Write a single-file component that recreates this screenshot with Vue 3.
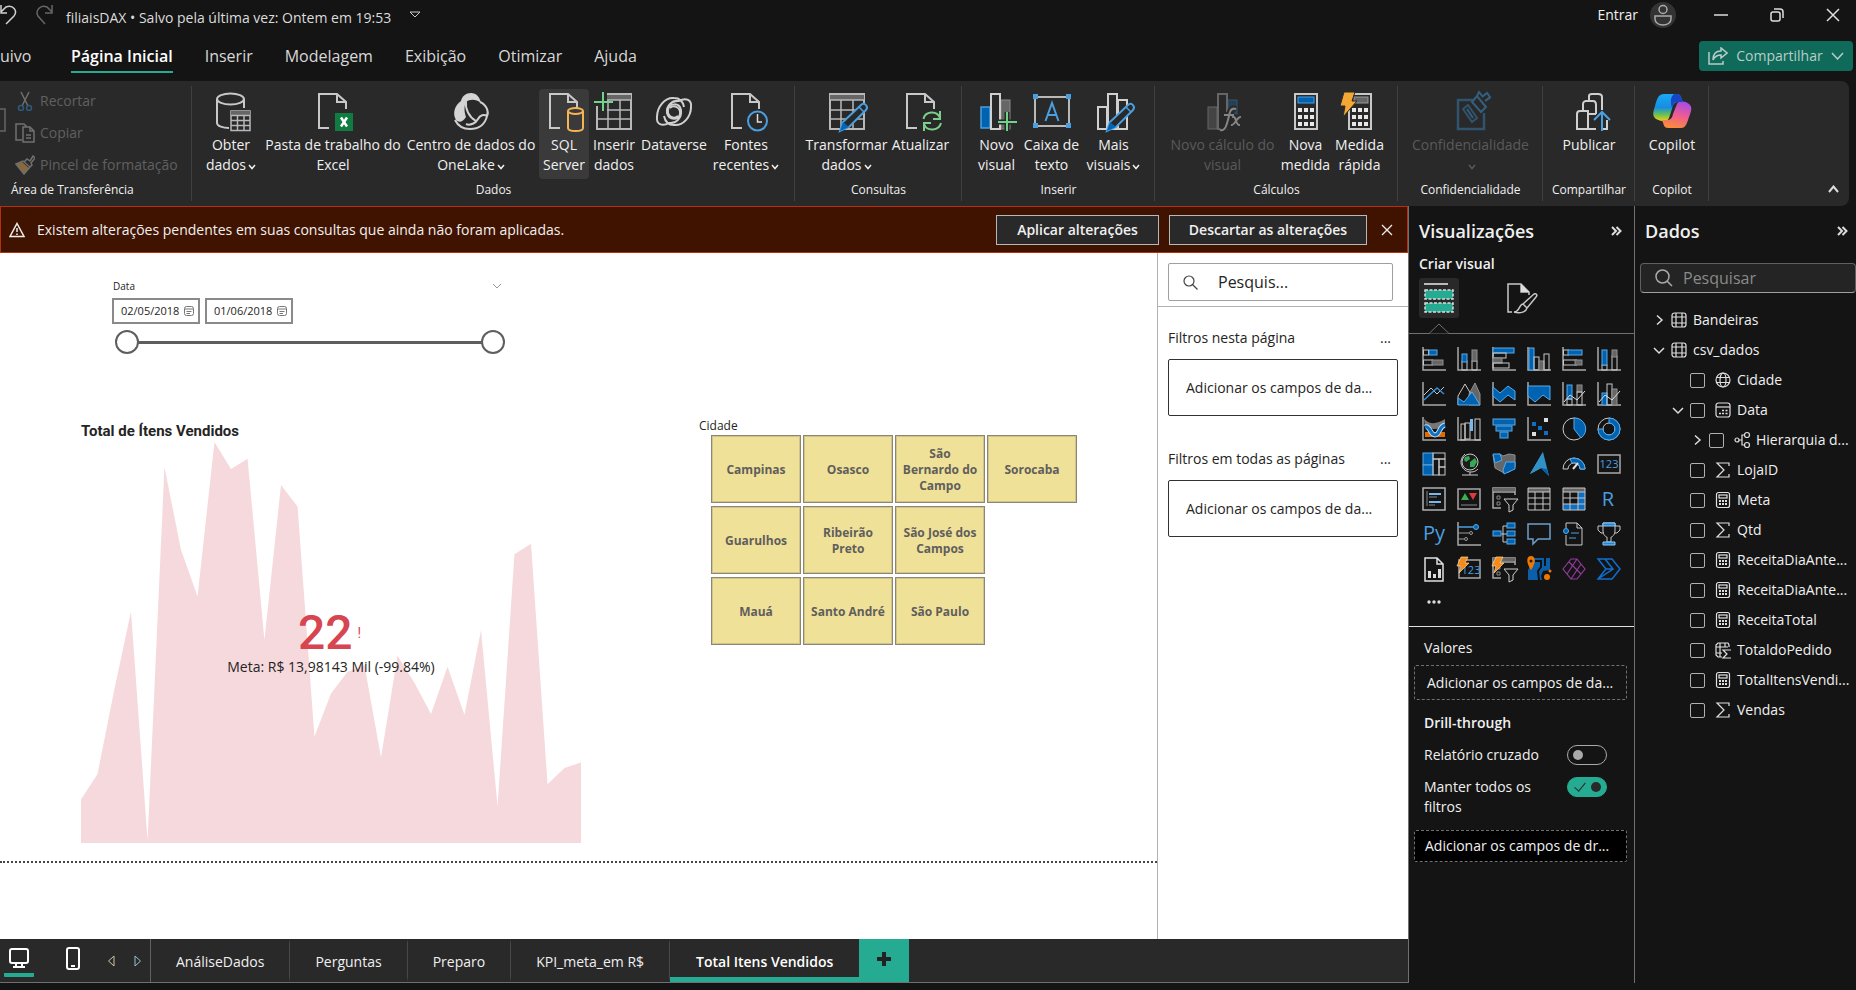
<script setup>
import { ref } from 'vue'

const menus = ['uivo', 'Página Inicial', 'Inserir', 'Modelagem', 'Exibição', 'Otimizar', 'Ajuda']

const doc = '<path d="M16 36H6V2H24L33 10V17M24 2V10H33" fill="none" stroke="#c8c8c8" stroke-width="2"/>'
const pencil = '<path d="M13 39L16 30L34 13C37 10 42 14 39 18L22 35Z" fill="#292929" stroke="#4a9fe0" stroke-width="2"/><path d="M13 39L16 30L22 35Z" fill="#0067b8"/><path d="M32 15L37 20" stroke="#4a9fe0" stroke-width="1.5"/>'
const gridLines = '<rect x="3" y="2" width="34" height="35" fill="none" stroke="#b8b8b8" stroke-width="2"/><path d="M3 3H37V8H3Z" fill="#666"/><path d="M3 8H37M3 18H37M3 27H37M14 8V37M26 8V37" stroke="#b8b8b8" stroke-width="1.5"/>'
const calc = '<rect x="9" y="2" width="22" height="35" fill="none" stroke="#c8c8c8" stroke-width="2"/><path d="M12 16h4v4h-4zM18 16h4v4h-4zM24 16h4v4h-4zM12 23h4v4h-4zM18 23h4v4h-4zM24 23h4v4h-4zM12 30h4v4h-4zM18 30h4v4h-4zM24 30h4v4h-4z" fill="#e8e8e8"/>'

const ribbonIcons = {
  database: '<path d="M33 16V7M6 7V31C6 34 12 36 18 36" fill="none" stroke="#c8c8c8" stroke-width="2"/><ellipse cx="19.5" cy="7" rx="13.5" ry="5.5" fill="none" stroke="#c8c8c8" stroke-width="2"/><rect x="20" y="19" width="19" height="19.5" fill="#292929" stroke="#b8b8b8" stroke-width="1.5"/><path d="M20 19H39V23H20Z" fill="#666"/><path d="M20 23.5H39M20 28.5H39M20 33.5H39M26.5 23V38M33 23V38" stroke="#b8b8b8" stroke-width="1.5"/>',
  excel: doc + '<rect x="22" y="21" width="18" height="18" fill="#107c41"/><path d="M28 25.5L34 34.5M34 25.5L28 34.5" stroke="#fff" stroke-width="2.5"/>',
  onelake: '<path d="M10 9C11 4 15 1 20 1C25 1 29 5 30 11C25 7 19 7 15 10C13 14 13 20 15 25C12 30 8 31 5 28C1 21 4 13 10 9Z" fill="#d4d4d4"/><path d="M29 10C36 13 38 20 36 24C34 33 27 37 19 37C12 37 7 34 4 28M15 9C14 17 18 25 25 29M15 32C19 34 25 31 27 27C29 23 33 22 36 24" fill="none" stroke="#d0d0d0" stroke-width="2"/>',
  sql: doc + '<path d="M24 19V36C24 40 39 40 39 36V19" fill="#3a3a3a" stroke="#f5b454" stroke-width="2"/><ellipse cx="31.5" cy="19" rx="7.5" ry="3" fill="#3a3a3a" stroke="#f5b454" stroke-width="2"/>',
  insertTable: gridLines + '<path d="M0 0H13V19H0Z" fill="#292929"/><path d="M9 0V19M0 10H19" stroke="#6fd38a" stroke-width="2"/><path d="M3 14V37" stroke="#b8b8b8" stroke-width="2"/>',
  dataverse: '<path d="M24 24C20 28 13 24 14 18C15 11 25 10 27 18C28 26 22 32 15 31C8 35 2 32 3 25C3 15 11 5 20 6C26 6 29 10 30 15" fill="none" stroke="#d0d0d0" stroke-width="2"/><path d="M16 16C20 12 27 16 26 22C25 28 15 29 13 21C12 14 18 8 25 9C32 5 38 8 37 15C37 25 29 34 20 33C14 33 11 29 10 24" fill="none" stroke="#d0d0d0" stroke-width="2"/>',
  recent: doc + '<circle cx="31.5" cy="29" r="9.5" fill="#292929" stroke="#4a9fe0" stroke-width="2"/><path d="M31.5 22V30H36" fill="none" stroke="#ddd" stroke-width="1.5"/>',
  transform: gridLines + pencil,
  refresh: doc + '<circle cx="31" cy="29" r="11" fill="#292929"/><path d="M22.5 27C24 19 36 18 39 26M39 19V27H32M40 31C38 39 26 40 23 32M23 39V31H30" fill="none" stroke="#7ad08a" stroke-width="2"/>',
  newVisual: '<rect x="4" y="15" width="9" height="21" fill="#0063b1" stroke="#4a9fe0" stroke-width="1.5"/><rect x="24" y="8" width="9" height="29" fill="#666" stroke="#8a8a8a"/><rect x="14" y="2" width="9" height="35" fill="#292929" stroke="#d0d0d0" stroke-width="2"/><path d="M30 20V39M21 30H40" stroke="#292929" stroke-width="5"/><path d="M30 20V39M21 30H40" stroke="#6fd38a" stroke-width="2"/>',
  textBox: '<rect x="3" y="5" width="34" height="29" fill="none" stroke="#b8b8b8" stroke-width="2"/><path d="M1 2h5v5H1zM34 2h5v5h-5zM1 31h5v5H1zM34 31h5v5h-5z" fill="#4a9fe0"/><path d="M13.5 29L20 11L26.5 29M16 23H24" fill="none" stroke="#4a9fe0" stroke-width="2"/>',
  moreVisuals: '<path d="M13 15H4V37H13ZM24 8H33V37H24ZM14 2H23V37H14Z" fill="#292929" stroke="#d0d0d0" stroke-width="2"/>' + pencil,
  visualCalc: '<rect x="5" y="15" width="9" height="22" fill="#444" stroke="#666"/><rect x="25" y="8" width="9" height="14" fill="#263f52" stroke="#34566f"/><rect x="15" y="2" width="9" height="35" fill="#292929" stroke="#666" stroke-width="2"/><path d="M17 38C23 40 24 31 27 20C28 17 30 16 33 17M21 23H31M29 25C34 23 32 34 37 33M38 25C34 24 32 34 28 33" fill="none" stroke="#292929" stroke-width="6"/><path d="M17 38C23 40 24 31 27 20C28 17 30 16 33 17M21 23H31M29 25C34 23 32 34 37 33M38 25C34 24 32 34 28 33" fill="none" stroke="#858585" stroke-width="2"/>',
  measure: calc + '<rect x="12" y="5" width="16" height="6" fill="#0063b1" stroke="#4a9fe0"/>',
  quickMeasure: calc + '<rect x="14" y="5" width="14" height="6" fill="#666" stroke="#999"/><path d="M4 0H15L12 9H17L3 25L5 14H0Z" fill="#f5a733" stroke="#292929"/>',
  sensitivity: '<path d="M22 8H7V37H33V21" fill="none" stroke="#30546d" stroke-width="2.5"/><path d="M12 17L17 13L26 26L21 30Z" fill="none" stroke="#30546d" stroke-width="2"/><path d="M16 17L22 26M21 10L26 4L35 15L30 20ZM26 4L28 0L32 5M31 5L36 1L39 5L34 9M34 9L39 6" fill="none" stroke="#34607f" stroke-width="2"/>',
  publish: '<path d="M23 37H8V22C8 20 9 19 11 19H19V37M14 19V12C14 10 16 9 17 9H24C26 9 27 11 27 13V22M20 9V4C20 3 21 2 23 2H29C31 2 33 3 33 5V18M19 22H27M23 37H27M34 37H38V28" fill="none" stroke="#d0d0d0" stroke-width="2"/><path d="M33 39V21M25 28L33 20L41 28" fill="none" stroke="#4a9fe0" stroke-width="2"/>',
  copilot: '<defs><linearGradient id="copA" x1="0" y1="0" x2="0" y2="1"><stop offset="0" stop-color="#1ba8f5"/><stop offset=".5" stop-color="#168de0"/><stop offset=".75" stop-color="#66bf57"/><stop offset="1" stop-color="#f2ce13"/></linearGradient><linearGradient id="copB" x1=".7" y1="0" x2=".4" y2="1"><stop offset="0" stop-color="#a24be8"/><stop offset=".5" stop-color="#ee5b94"/><stop offset="1" stop-color="#fb8b3b"/></linearGradient></defs><path d="M12 2H25C29 2 29 6 31 10H26C22 10 21 13 20 17L17 26C15 31 8 29 4 27C0 24 1 20 3 14C5 7 6 2 12 2Z" fill="url(#copA)"/><path d="M29 36H16C12 36 12 33 10 28H14C19 28 20 26 21 22L25 12C27 8 33 9 37 12C41 15 39 20 37 25C35 31 34 36 29 36Z" fill="url(#copB)"/><path d="M22 2H25C29 2 29 6 31 10H26C22 10 22 10 20 16C18 9 19 4 22 2Z" fill="#1745c5"/>'
}

const groups = [
  {
    name: 'Dados', key: 'dados', items: [
      { icon: 'database', a: 'Obter', b: 'dados', drop: true, w: 'w64' },
      { icon: 'excel', a: 'Pasta de trabalho do', b: 'Excel', w: 'w140' },
      { icon: 'onelake', a: 'Centro de dados do', b: 'OneLake', drop: true, w: 'w136' },
      { icon: 'sql', a: 'SQL', b: 'Server', w: 'w50', active: true },
      { icon: 'insertTable', a: 'Inserir', b: 'dados', w: 'w50' },
      { icon: 'dataverse', a: 'Dataverse', b: '', w: 'w70' },
      { icon: 'recent', a: 'Fontes', b: 'recentes', drop: true, w: 'w74' }
    ]
  },
  {
    name: 'Consultas', key: 'consultas', items: [
      { icon: 'transform', a: 'Transformar', b: 'dados', drop: true, w: 'w84' },
      { icon: 'refresh', a: 'Atualizar', b: '', w: 'w64' }
    ]
  },
  {
    name: 'Inserir', key: 'inserir', items: [
      { icon: 'newVisual', a: 'Novo', b: 'visual', w: 'w50' },
      { icon: 'textBox', a: 'Caixa de', b: 'texto', w: 'w60' },
      { icon: 'moreVisuals', a: 'Mais', b: 'visuais', drop: true, w: 'w64' }
    ]
  },
  {
    name: 'Cálculos', key: 'calculos', items: [
      { icon: 'visualCalc', a: 'Novo cálculo do', b: 'visual', w: 'w112', off: true },
      { icon: 'measure', a: 'Nova', b: 'medida', w: 'w54' },
      { icon: 'quickMeasure', a: 'Medida', b: 'rápida', w: 'w54' }
    ]
  },
  { name: 'Confidencialidade', key: 'conf', items: [{ icon: 'sensitivity', a: 'Confidencialidade', b: '', drop: true, w: 'w136', off: true }] },
  { name: 'Compartilhar', key: 'comp', items: [{ icon: 'publish', a: 'Publicar', b: '', w: 'w64' }] },
  { name: 'Copilot', key: 'cop', items: [{ icon: 'copilot', a: 'Copilot', b: '', w: 'w64' }] }
]

const axis = '<path d="M1 0V23H24" fill="none" stroke="#a8a8a8" stroke-width="1.5"/>'
const bolt = '<path d="M4 0H11L8 6H12L2 16L4 9H0Z" fill="#f28a1c" stroke="#ffd79a" stroke-width=".7"/>'
const B = 'fill="#0063b1" stroke="#5aa9e6"'
const G = 'fill="#666" stroke="#8f8f8f"'
const N = 'fill="none" stroke="#c8c8c8"'
const r = (x, y, w, h, s) => `<rect x="${x}" y="${y}" width="${w}" height="${h}" ${s}/>`
const box = r(1, 2, 22, 20, 'fill="none" stroke="#a8a8a8" stroke-width="1.5"')
const slicerBase = '<path d="M9 21H1V1H23V8M1 5H23" fill="none" stroke="#a8a8a8" stroke-width="1.5"/><path d="M1 1H23V4H1Z" fill="#666"/><path d="M5 9h3v3H5zM5 15h3v3H5z" fill="none" stroke="#888"/><path d="M12 12H26L21 18V23L17 25V18Z" fill="#141414" stroke="#d0d0d0"/>'

const visuals = [
  ['Barras empilhadas', axis + r(1.5, 3, 5, 5, N) + r(7, 3, 8, 5, B) + r(1.5, 13, 9, 5, N) + r(10, 13, 11, 5, G)],
  ['Colunas empilhadas', axis + r(5, 14, 5, 9, N) + r(5, 7, 5, 8, B) + r(15, 14, 5, 9, N) + r(15, 3, 5, 11, G)],
  ['Barras clusterizadas', axis + r(1, 1, 21, 5, B) + r(1, 6, 13, 5, N) + r(1, 11, 9, 5, G) + r(1, 16, 16, 5, N)],
  ['Colunas clusterizadas', axis + r(2, 1, 5, 22, B) + r(7, 10, 5, 13, N) + r(12, 14, 5, 9, G) + r(17, 7, 5, 16, N)],
  ['Barras 100%', axis + r(1.5, 3, 5, 5, N) + r(6, 3, 14, 5, B) + r(1.5, 13, 13, 5, N) + r(13, 13, 7, 5, G)],
  ['Colunas 100%', axis + r(5, 18, 5, 5, N) + r(5, 3, 5, 15, B) + r(15, 9, 5, 14, N) + r(15, 3, 5, 7, G)],
  ['Linhas', axis + `<path d="M2 13L9 6L15 12L22 5" ${N}/><path d="M2 18L15 6L22 12" fill="none" stroke="#318edb" stroke-width="1.5"/>`],
  ['Área', `<path d="M12 12L18 1L23 12V23H12Z" ${G}/><path d="M1 14L8 2L15 14M1 14V23" ${N}/><path d="M1 16L7 20L15 10L23 23H1Z" ${B}/>`],
  ['Área empilhada', axis + `<path d="M1 5L8 11L16 4L23 9V18L16 13L8 20L1 14Z" ${B}/>`],
  ['Área 100%', axis + `<path d="M1 4H23V18L16 13L8 20L1 14Z" ${B}/>`],
  ['Linhas e colunas empilhadas', axis + r(5, 3, 5, 14, B) + r(5, 17, 5, 6, N) + r(15, 3, 5, 7, G) + r(15, 10, 5, 13, N) + `<path d="M2 20L8 13L15 18L23 9" fill="none" stroke="#ddd"/>`],
  ['Linhas e colunas clusterizadas', axis + r(5, 11, 5, 12, B) + r(10, 2, 5, 21, N) + r(15, 7, 5, 16, G) + `<path d="M2 20L8 13L15 18L23 9" fill="none" stroke="#ddd"/>`],
  ['Faixas', axis + `<path d="M3 15H23V20H3Z" fill="#e06c00"/><path d="M2 2C8 8 15 7 23 2V9C17 13 8 13 3 9Z" fill="#777"/><path d="M3 10C8 8 8 18 13 18S17 9 23 8" fill="none" stroke="#b9dcf8" stroke-width="5"/><path d="M3 10C8 8 8 18 13 18S17 9 23 8" fill="none" stroke="#0f6fc0" stroke-width="3"/>`],
  ['Cascata', axis + r(4, 7, 4, 16, N) + r(8, 6, 5, 16, N) + '<path d="M13 2h3v12h-3z" fill="#7ab8ec"/>' + r(18, 2, 5, 21, N)],
  ['Funil', r(1, 2, 22, 6, B) + r(4, 9, 16, 5, B) + r(8, 15, 8, 6, B)],
  ['Dispersão', axis + '<path d="M5 5h4v4H5zM11 9h4v4h-4zM17 14h4v4h-4z" fill="#0f6fc0"/><path d="M17 1h4v4h-4zM5 15h4v4H5z" fill="#ddd"/>'],
  ['Pizza', `<circle cx="12" cy="12" r="11" ${N}/><path d="M12 1A11 11 0 0 1 19 21L12 12Z" ${B}/>`],
  ['Rosca', `<circle cx="12" cy="12" r="11" ${N}/><circle cx="12" cy="12" r="6" ${N}/><path d="M12 1A11 11 0 1 1 1 12H6A6 6 0 1 0 12 6Z" ${B}/>`],
  ['Treemap', r(1, 1, 10, 12, B) + r(1, 13, 10, 10, B) + r(11, 1, 12, 6, N) + r(11, 7, 6, 16, N) + r(17, 7, 6, 8, N) + r(17, 15, 6, 8, N)],
  ['Mapa', `<circle cx="13" cy="10" r="8" fill="#1c1c1c" stroke="#ccc"/><path d="M8 5L12 4L13 7L9 10L7 8ZM13 10L18 6L20 10L17 15H13Z" fill="#34a853"/><path d="M8 2C0 9 5 20 14 20C17 20 19 19 21 17M13 20V23M5 23H21" ${N}/>`],
  ['Mapa coroplético', `<path d="M1 3L8 2L11 4L17 2L23 3V15L17 20L12 21L3 16Z" ${G}/><path d="M1 2H8L10 8L3 11Z" ${B}/><path d="M14 10H23V17L12 22L11 18Z" ${B}/>`],
  ['Azure Maps', '<path d="M16 0L3 22L14 16Z" fill="#6ac5ea"/><path d="M16 0L22 24L14 16L3 22Z" fill="#2f91c5"/><path d="M14 16L22 24L20 17Z" fill="#0063b1"/>'],
  ['Medidor', `<path d="M1 17A11 11 0 0 1 23 17H18A6 6 0 0 0 6 17Z" ${N}/><path d="M8 7A11 11 0 0 1 23 17H18A6 6 0 0 0 10 11Z" ${B}/><path d="M11 17L16 11" stroke="#ddd" stroke-width="2"/>`],
  ['Cartão', r(1, 3, 22, 18, 'fill="none" stroke="#a8a8a8" stroke-width="1.5"') + '<text x="12" y="16" font-size="11" text-anchor="middle" font-family="Open Sans" fill="#4a9fe0">123</text>'],
  ['Cartão de várias linhas', r(1, 1, 22, 22, 'fill="none" stroke="#b0b0b0" stroke-width="1.5"') + '<path d="M5 4V19M7 10H15M7 18H13" stroke="#888"/><path d="M7 7H19M7 15H19" stroke="#7ab8ec" stroke-width="2"/>'],
  ['KPI', box + '<path d="M4 13L8 6L12 13Z" fill="#3fae4f"/><path d="M12 6H20L16 13Z" fill="#e03b3b"/><path d="M4 18H20" stroke="#888"/>'],
  ['Segmentação', slicerBase],
  ['Tabela', `<path d="M1 1H23V5H1Z" fill="#666"/><path d="M1 1H23V23H1ZM1 5H23M1 11H23M1 17H23M8 5V23M16 5V23" ${N}/>`],
  ['Matriz', `<path d="M1 1H23V5H1Z" fill="#666"/><path d="M16 5H23V23H1V17H16Z" fill="#0f6fc0"/><path d="M1 1H23V23H1ZM1 5H23M1 11H23M1 17H23M8 5V23M16 5V23" ${N}/>`],
  ['Script R', '<text x="11" y="19" font-size="20" text-anchor="middle" font-family="Open Sans" fill="#4a9fe0">R</text>'],
  ['Script Python', '<text x="12" y="18" font-size="20" text-anchor="middle" font-family="Open Sans" fill="#4a9fe0">Py</text>'],
  ['Influenciadores', axis + '<path d="M1 5H16" stroke="#4a9fe0" stroke-width="1.5"/><circle cx="19" cy="5" r="2.5" fill="#0063b1" stroke="#5aa9e6"/><path d="M1 11H12M1 17H7" stroke="#999"/><circle cx="14" cy="11" r="1.5" fill="none" stroke="#999"/><circle cx="9" cy="17" r="1.5" fill="none" stroke="#999"/>'],
  ['Árvore hierárquica', `<path d="M9 12H15M15 4H11V20H15" ${N}/>` + r(1, 9, 8, 5, B) + r(15, 1, 8, 5, B) + r(15, 9, 8, 5, B) + r(15, 17, 8, 5, B)],
  ['Perguntas', '<path d="M1 2H23V17H11L6 22V17H1Z" fill="none" stroke="#6d9fc9" stroke-width="1.5"/>'],
  ['Narrativa', `<path d="M4 6V1H15L20 6V23H4V13M15 1V6H20" ${N}/><circle cx="4" cy="9" r="2.5" ${B}/><path d="M9 11H17M7 16H14" stroke="#4a9fe0"/>`],
  ['Metas', `<path d="M6 1H18V9C18 13 15 15 14 15V20H10V15C9 15 6 13 6 9ZM6 4H1V8L4 11H7M18 4H23V8L20 11H17" ${N}/><path d="M6 1H18V4H6ZM6 20H18V23H6Z" fill="#1f86d6" stroke="#8cc8f5"/>`],
  ['Relatório paginado', '<path d="M3 1H15L21 7V24H3ZM15 1V7H21" fill="none" stroke="#e0e0e0" stroke-width="1.5"/><path d="M6 14h3v7H6zM11 17h3v4h-3zM16 12h3v9h-3z" fill="#ddd"/>'],
  ['Novo cartão', r(2, 3, 21, 18, 'fill="none" stroke="#a8a8a8" stroke-width="1.5"') + '<text x="14" y="17" font-size="11" text-anchor="middle" font-family="Open Sans" fill="#4a9fe0">123</text>' + bolt],
  ['Nova segmentação', slicerBase + bolt],
  ['ArcGIS', '<path d="M7 1H23V13L16 14L14 19L15 23H1V13Z" fill="#0b5ea8"/><path d="M8 4H14V10L11 14L12 23M18 1V9" stroke="#111" stroke-width="2" fill="none"/><path d="M4 -1C-1 -1 -1 6 4 13C9 6 9 -1 4 -1Z" fill="#f07800"/><circle cx="4" cy="4" r="1.5" fill="#222"/><circle cx="20" cy="20" r="3" fill="#f07800"/><circle cx="23" cy="14" r="1.5" fill="#f07800"/>'],
  ['Power Apps', '<path d="M1 12L9 2H15L23 12L15 22H9ZM7 5L19 17M15 2L5 17M9 22L19 7" fill="none" stroke="#93399e" stroke-width="1.2"/>'],
  ['Power Automate', '<path d="M1 2H15L23 12L15 22H1L9 12ZM8 2L16 12L1 22M9 12H16" fill="none" stroke="#0f6fd0" stroke-width="1.5"/>']
]

const fieldIcons = {
  table: '<rect x="1" y="1" width="14" height="14" rx="2.5"/><path d="M1 5H15M1 11H15M5 1V15M11 1V15"/>',
  globe: '<circle cx="8" cy="8" r="7"/><ellipse cx="8" cy="8" rx="3" ry="7"/><path d="M1.5 5.5H14.5M1.5 10.5H14.5"/>',
  date: '<rect x="1" y="1" width="14" height="14" rx="2.5"/><path d="M1 5H15"/><path d="M7 8.5H9M10.5 8.5H12.5M4 11.5H6M7 11.5H9M10.5 11.5H12.5" stroke-width="1.5"/>',
  tree: '<circle cx="3" cy="8" r="2"/><circle cx="13" cy="3" r="2.5"/><circle cx="13" cy="13" r="2.5"/><path d="M5 8H8M10 3H8V13H10"/>',
  sum: '<path d="M14 4V1H2L9 8L2 15H14V12"/>',
  calc: '<rect x="1.5" y=".5" width="13" height="15" rx="2"/><rect x="4" y="3" width="8" height="3"/><path d="M4 9h2M7 9h2M10 9h2M4 12h2M7 12h2M10 12h2" stroke-width="2"/>',
  calcCol: '<path d="M7 15H3L1 13V3L3 1H13L14 3V5M5 1V15M1 5H13M1 11H7M10 1V5"/><path d="M16 8H8L12 12L8 16H16"/>'
}
const fields = [
  { t: 'Bandeiras', icon: 'table', lvl: 0, chev: 'right' },
  { t: 'csv_dados', icon: 'table', lvl: 0, chev: 'down' },
  { t: 'Cidade', icon: 'globe', lvl: 1 },
  { t: 'Data', icon: 'date', lvl: 1, chev: 'down' },
  { t: 'Hierarquia d...', icon: 'tree', lvl: 2, chev: 'right' },
  { t: 'LojaID', icon: 'sum', lvl: 1 },
  { t: 'Meta', icon: 'calc', lvl: 1 },
  { t: 'Qtd', icon: 'sum', lvl: 1 },
  { t: 'ReceitaDiaAnte...', icon: 'calc', lvl: 1 },
  { t: 'ReceitaDiaAnte...', icon: 'calc', lvl: 1 },
  { t: 'ReceitaTotal', icon: 'calc', lvl: 1 },
  { t: 'TotaldoPedido', icon: 'calcCol', lvl: 1 },
  { t: 'TotalItensVendi...', icon: 'calc', lvl: 1 },
  { t: 'Vendas', icon: 'sum', lvl: 1 }
]

const cities = ['Campinas', 'Osasco', 'São Bernardo do Campo', 'Sorocaba', 'Guarulhos', 'Ribeirão Preto', 'São José dos Campos', '', 'Mauá', 'Santo André', 'São Paulo']
const pages = ['AnáliseDados', 'Perguntas', 'Preparo', 'KPI_meta_em R$', 'Total Itens Vendidos']

/* Height of the trend below the top of the plot, one entry per day */
const trend = [1071, 994, 740, 508, 1193, 75, 323, 463, 0, 81, 50, 593, 129, 193, 883, 753, 688, 668, 945, 640, 721, 815, 673, 817, 563, 1091, 336, 305, 1025, 976, 960]
const area = 'M0 1201L' + trend.map((y, i) => `${Math.round(i * 48.33)} ${y}`).join('L') + 'L1450 1201Z'

const cross = ref(false)
const keep = ref(true)
const from = ref('02/05/2018')
const to = ref('01/06/2018')
</script>

<template>
  <div class="app">
    <header class="title-bar">
      <button class="plain" aria-label="Desfazer"><svg width="18" height="20" viewBox="0 0 18 20"><path d="M1 0V8H7M1 7L6 2C13 -1 18 6 14 11L6 19" fill="none" stroke="#d0d0d0" stroke-width="1.5" /></svg></button>
      <button class="plain redo" aria-label="Refazer"><svg width="18" height="20" viewBox="0 0 18 20"><path d="M16 0V8H9M16 7L11 2C4 -1 -1 6 2 11L9 19" fill="none" stroke="#666" stroke-width="1.5" /></svg></button>
      <span class="doc-name">filiaisDAX • Salvo pela última vez: Ontem em 19:53</span>
      <svg class="tri" width="12" height="8" viewBox="0 0 12 8"><path d="M1 1H11L6 6Z" fill="none" stroke="#ccc" /></svg>
      <span class="grow"></span>
      <button class="plain signin">Entrar</button>
      <svg class="avatar" width="26" height="26" viewBox="0 0 26 26"><circle cx="13" cy="13" r="13" fill="#333" /><g fill="none" stroke="#aaa" stroke-width="1.5"><circle cx="13" cy="7.5" r="4" /><path d="M5 14H21V17C21 25 5 25 5 17Z" /></g></svg>
      <button class="plain win" aria-label="Minimizar"><svg width="14" height="14"><path d="M0 7H14" stroke="#ddd" stroke-width="1.5" /></svg></button>
      <button class="plain win" aria-label="Restaurar"><svg width="14" height="14" fill="none" stroke="#ddd" stroke-width="1.5"><rect x="1" y="4" width="9" height="9" rx="2" /><path d="M4 1H10C12 1 13 2 13 4V10" /></svg></button>
      <button class="plain win" aria-label="Fechar"><svg width="14" height="14"><path d="M1 1L13 13M13 1L1 13" stroke="#ddd" stroke-width="1.5" /></svg></button>
    </header>

    <nav class="menu">
      <button v-for="(m, i) in menus" :key="m" class="plain tab" :class="{ on: i === 1 }">{{ m }}</button>
      <span class="grow"></span>
      <button class="share">
        <svg width="20" height="18" viewBox="0 0 20 18" fill="none" stroke="#b8cdc8" stroke-width="1.5"><path d="M1 5V17H15V14M5 13C5 7 8 4 13 4V1L19 6L13 11V8C9 8 7 9 5 13Z" /></svg>
        <span>Compartilhar</span>
        <svg width="13" height="8"><path d="M1 1L6.5 7L12 1" fill="none" stroke="#b8cdc8" stroke-width="1.5" /></svg>
      </button>
    </nav>

    <section class="ribbon">
      <div class="group clip">
        <div class="clip-body">
          <svg class="paste" width="6" height="28" viewBox="0 0 6 28"><path d="M0 2H5V24H0" fill="none" stroke="#666" stroke-width="1.5" /></svg>
          <div class="clip-list">
            <button class="plain" disabled><svg width="20" height="20" viewBox="0 0 20 20" fill="none"><path d="M6 1L13 15M14 1L7 15" stroke="#707070" stroke-width="1.5" /><circle cx="6" cy="17" r="2.5" stroke="#2f5b7c" stroke-width="1.5" /><circle cx="14" cy="17" r="2.5" stroke="#2f5b7c" stroke-width="1.5" /></svg>Recortar</button>
            <button class="plain" disabled><svg width="20" height="20" viewBox="0 0 20 20" fill="none" stroke="#707070" stroke-width="1.5"><path d="M7 17H1V1H9L12 4M8 4H15L19 8V19H8ZM15 4V8H19M11 12H16M11 15H16" /></svg>Copiar</button>
            <button class="plain" disabled><svg width="20" height="20" viewBox="0 0 20 20"><path d="M1 9L9 19L14 13L7 7Z" fill="#8a6a3a" /><path d="M1 9L8 6L15 12L9 19ZM9 7L12 4L15 6L18 1L20 3L16 8L17 10L15 12" fill="none" stroke="#707070" stroke-width="1.5" /></svg>Pincel de formatação</button>
          </div>
        </div>
        <div class="group-name left">Área de Transferência</div>
      </div>
      <div v-for="g in groups" :key="g.key" class="group" :class="g.key">
        <div class="tools">
          <button v-for="t in g.items" :key="t.a" class="tool" :class="[t.w, { active: t.active, off: t.off }]" :disabled="t.off">
            <svg width="40" height="40" viewBox="0 0 40 40" overflow="visible" v-html="ribbonIcons[t.icon]"></svg>
            <span>{{ t.a }}</span>
            <span>{{ t.b }}<svg v-if="t.drop" class="caret" width="8" height="6"><path d="M1 1L4 4.5L7 1" fill="none" stroke="currentColor" stroke-width="1.5" /></svg></span>
          </button>
        </div>
        <div class="group-name">{{ g.name }}</div>
      </div>
      <button class="plain fold" aria-label="Recolher faixa"><svg width="11" height="8"><path d="M1 7L5.5 1.5L10 7" fill="none" stroke="#ddd" stroke-width="2" /></svg></button>
    </section>

    <div class="work">
      <main class="center">
        <div class="notice">
          <svg width="16" height="16" viewBox="0 0 16 16" fill="none" stroke="#eee" stroke-width="1.5"><path d="M8 1.5L15 14.5H1ZM8 6V10M8 11.5V13" /></svg>
          <span>Existem alterações pendentes em suas consultas que ainda não foram aplicadas.</span>
          <span class="grow"></span>
          <button class="apply">Aplicar alterações</button>
          <button class="discard">Descartar as alterações</button>
          <button class="plain dismiss" aria-label="Fechar aviso"><svg width="12" height="12"><path d="M1 1L11 11M11 1L1 11" stroke="#eee" stroke-width="1.3" /></svg></button>
        </div>

        <div class="stage">
          <div class="canvas">
            <div class="page">
              <section class="slicer">
                <div class="slicer-head"><span>Data</span><svg width="10" height="6"><path d="M1 1L5 5L9 1" fill="none" stroke="#999" /></svg></div>
                <div class="dates">
                  <label class="date"><input v-model="from" aria-label="Data inicial"><svg width="10" height="10" fill="none" stroke="#777"><rect x=".5" y=".5" width="9" height="9" rx="2" /><path d="M1 3H9M2.5 5.5H7.5M2.5 7.5H6" /></svg></label>
                  <label class="date"><input v-model="to" aria-label="Data final"><svg width="10" height="10" fill="none" stroke="#777"><rect x=".5" y=".5" width="9" height="9" rx="2" /><path d="M1 3H9M2.5 5.5H7.5M2.5 7.5H6" /></svg></label>
                </div>
                <div class="range">
                  <input type="range" min="0" max="30" value="0" aria-label="Início do período">
                  <input type="range" min="0" max="30" value="30" aria-label="Fim do período">
                </div>
              </section>

              <div class="visual-row">
                <section class="kpi">
                  <h2>Total de Ítens Vendidos</h2>
                  <div class="plot">
                    <svg viewBox="0 0 1450 1201" preserveAspectRatio="none"><path :d="area" fill="#f6d9dd" /></svg>
                    <div class="kpi-text">
                      <div class="kpi-value"><strong>22</strong><span>!</span></div>
                      <div class="kpi-goal">Meta: R$ 13,98143 Mil (-99.84%)</div>
                    </div>
                  </div>
                </section>
                <section class="city">
                  <h3>Cidade</h3>
                  <div class="tiles">
                    <template v-for="(c, i) in cities" :key="i">
                      <button v-if="c">{{ c }}</button><span v-else></span>
                    </template>
                  </div>
                </section>
              </div>
            </div>
          </div>

          <aside class="filters">
            <div class="filter-search">
              <label><svg width="15" height="15" viewBox="0 0 15 15" fill="none" stroke="#444" stroke-width="1.2"><circle cx="6" cy="6" r="5" /><path d="M9.5 9.5L14.5 14.5" /></svg><input placeholder="Pesquis..." aria-label="Pesquisar filtros"></label>
            </div>
            <div class="filter-body">
              <div class="filter-head"><span>Filtros nesta página</span><button class="plain" aria-label="Mais opções">...</button></div>
              <button class="well">Adicionar os campos de da...</button>
              <div class="filter-head second"><span>Filtros em todas as páginas</span><button class="plain" aria-label="Mais opções">...</button></div>
              <button class="well">Adicionar os campos de da...</button>
            </div>
          </aside>
        </div>

        <footer class="pages">
          <button class="plain device on" aria-label="Layout de área de trabalho"><svg width="20" height="20" viewBox="0 0 20 20" fill="none" stroke="#fff" stroke-width="2"><rect x="1" y="1" width="18" height="14" rx="2" /><path d="M7 15V18M13 15V18M4 19H16" /></svg></button>
          <button class="plain device" aria-label="Layout móvel"><svg width="14" height="24" viewBox="0 0 14 24" fill="none" stroke="#fff" stroke-width="2"><rect x="1" y="1" width="12" height="21" rx="2" /><path d="M5 19H9" /></svg></button>
          <button class="plain arrow" aria-label="Página anterior"><svg width="8" height="12"><path d="M7 1V11L1.5 6Z" fill="none" stroke="#d0c0a0" /></svg></button>
          <button class="plain arrow" aria-label="Próxima página"><svg width="8" height="12"><path d="M1 1V11L6.5 6Z" fill="none" stroke="#90c4cc" /></svg></button>
          <div class="page-tabs">
            <button v-for="(p, i) in pages" :key="p" :class="{ on: i === 4 }">{{ p }}</button>
            <button class="add" aria-label="Nova página"><svg width="14" height="14"><path d="M7 0V14M0 7H14" stroke="#222" stroke-width="4" /></svg></button>
          </div>
        </footer>
      </main>

      <aside class="viz">
        <div class="pane-head"><h2>Visualizações</h2><button class="plain" aria-label="Recolher"><svg width="11" height="10"><path d="M1 1L5 5L1 9M5.5 1L9.5 5L5.5 9" fill="none" stroke="#ddd" stroke-width="2" /></svg></button></div>
        <h3>Criar visual</h3>
        <div class="modes">
          <button class="mode on" aria-label="Criar visual"><svg width="32" height="32" viewBox="0 0 32 32"><path d="M1 2H25" stroke="#bbb" stroke-width="2" /><rect x="2" y="8" width="28" height="9" fill="#25ab92" stroke="#ddd" stroke-width="1.5" stroke-dasharray="3 1.5" /><rect x="2" y="21" width="28" height="9" fill="#25ab92" stroke="#ddd" stroke-width="1.5" stroke-dasharray="3 1.5" /></svg></button>
          <button class="mode" aria-label="Formatar visual"><svg width="32" height="32" viewBox="0 0 32 32"><path d="M6 30H2V2H15L23 10V13M15 2V10H23" fill="none" stroke="#c8c8c8" stroke-width="1.5" /><path d="M15 2V10H23Z" fill="#ddd" /><path d="M17 22L28 12C30 11 32 13 30 15L21 26C19 32 11 31 8 30C14 30 13 22 17 22ZM17 22L21 26" fill="#141414" stroke="#c8c8c8" stroke-width="1.5" /></svg></button>
        </div>
        <svg class="notch" width="20" height="11"><path d="M0 10.5H0L10 1L20 10.5" fill="#141414" stroke="#707070" /></svg>
        <div class="gallery">
          <button v-for="v in visuals" :key="v[0]" class="plain" :aria-label="v[0]"><svg width="24" height="24" viewBox="0 0 24 24" overflow="visible" v-html="v[1]"></svg></button>
          <button class="plain dots" aria-label="Mais visuais"><svg width="14" height="4" fill="#ddd"><circle cx="2" cy="2" r="1.7" /><circle cx="7" cy="2" r="1.7" /><circle cx="12" cy="2" r="1.7" /></svg></button>
        </div>
        <div class="build">
          <div class="lbl">Valores</div>
          <button class="drop">Adicionar os campos de da...</button>
          <div class="lbl strong">Drill-through</div>
          <label class="switch"><span>Relatório cruzado</span><input v-model="cross" type="checkbox" role="switch"></label>
          <label class="switch two"><span>Manter todos os filtros</span><input v-model="keep" type="checkbox" role="switch"></label>
          <button class="drop black">Adicionar os campos de dr...</button>
        </div>
      </aside>

      <aside class="data">
        <div class="pane-head"><h2>Dados</h2><button class="plain" aria-label="Recolher"><svg width="11" height="10"><path d="M1 1L5 5L1 9M5.5 1L9.5 5L5.5 9" fill="none" stroke="#ddd" stroke-width="2" /></svg></button></div>
        <label class="data-search"><svg width="18" height="18" viewBox="0 0 18 18" fill="none" stroke="#aaa" stroke-width="1.5"><circle cx="7.5" cy="7.5" r="6.5" /><path d="M12 12L17 17" /></svg><input placeholder="Pesquisar" aria-label="Pesquisar dados"></label>
        <ul class="tree">
          <li v-for="(f, i) in fields" :key="i" :class="'lvl' + f.lvl">
            <button class="plain chev" :aria-label="f.t" :disabled="!f.chev">
              <svg v-if="f.chev" width="12" height="12" fill="none" stroke="#ddd" stroke-width="1.5"><path :d="f.chev === 'right' ? 'M4 1.5L9 6L4 10.5' : 'M1 4L6 9L11 4'" /></svg>
            </button>
            <input v-if="f.lvl" :id="'f' + i" type="checkbox">
            <svg class="ficon" width="16" height="16" viewBox="0 0 16 16" fill="none" stroke="#e0e0e0" stroke-width="1.2" overflow="visible" v-html="fieldIcons[f.icon]"></svg>
            <label :for="'f' + i">{{ f.t }}</label>
          </li>
        </ul>
      </aside>
    </div>
  </div>
</template>

<style>
html, body { margin: 0; background: #141414; }
</style>

<style scoped>
* { box-sizing: border-box; }
.app { min-height: 100vh; display: flex; flex-direction: column; background: #141414; color: #f0f0f0; font-family: "Open Sans", "Noto Sans", sans-serif; font-size: 14px; line-height: 20px; overflow: hidden; }
button, input { font: inherit; color: inherit; margin: 0; }
button { padding: 0; white-space: nowrap; }
h2, h3, ul { margin: 0; padding: 0; }
h2, h3 { font-weight: 600; }
svg { display: block; flex: none; }
.plain { background: none; border: 0; }
.grow { flex: 1; }

.title-bar { height: 34px; display: flex; align-items: center; padding: 0 16px 4px 0; }
.title-bar .redo { margin: 0 10px 0 18px; }
.doc-name { color: #dcdcdc; margin-left: 2px; padding-top: 5px; }
.tri { margin-left: 18px; }
.signin { margin-right: 12px; }
.avatar { margin-right: 38px; }
.win { margin-right: 42px; }
.win:last-child { margin-right: 0; }

.menu { height: 47px; display: flex; align-items: flex-start; padding: 7px 3px 0 0; gap: 32px; }
.tab { height: 32px; font-size: 16px; border-bottom: 2px solid transparent; color: #d8d8d8; }
.tab:first-child { margin-right: 10px; width: 29px; text-align: left; }
.tab.on { font-weight: 600; color: #fff; border-color: #25ab92; }
.share { width: 154px; height: 30px; border: 0; border-radius: 4px; background: #0f6a5a; color: #b8cdc8; display: flex; align-items: center; justify-content: center; gap: 8px; }

.ribbon { height: 125px; margin-right: 7px; background: #292929; border-radius: 0 8px 8px 0; display: flex; position: relative; }
.group { position: relative; display: flex; flex-direction: column; padding-top: 8px; flex: none; }
.group::after { content: ""; position: absolute; right: 0; top: 5px; bottom: 5px; width: 1px; background: #404040; }
.clip { width: 192px; }
.dados { width: 603px; }
.dados .tools { justify-content: flex-start; padding-left: 7px; }
.consultas { width: 167px; }
.inserir { width: 193px; }
.calculos { width: 243px; }
.conf { width: 145px; }
.comp { width: 92px; }
.cop { width: 74px; }
.clip-body { display: flex; height: 91px; }
.paste { margin-top: 18px; margin-right: 9px; }
.clip-list { display: flex; flex-direction: column; gap: 12px; padding-top: 2px; }
.clip-list button { display: flex; align-items: center; gap: 5px; color: #606060; }
.tools { display: flex; height: 91px; justify-content: center; }
.tool { height: 90px; border: 0; border-radius: 4px; background: none; display: flex; flex-direction: column; align-items: center; padding-top: 3px; flex: none; }
.tool span { display: flex; align-items: center; height: 20px; }
.tool svg { margin-bottom: 3px; }
.tool .caret { margin: 4px 0 0 2px; }
.tool.active { background: #3a3a3a; }
.tool.off { color: #5a5a5a; }
.w50 { width: 50px; }
.w54 { width: 54px; }
.w60 { width: 60px; }
.w64 { width: 64px; }
.w70 { width: 70px; }
.w74 { width: 74px; }
.w84 { width: 84px; }
.w112 { width: 112px; }
.w136 { width: 136px; }
.w140 { width: 140px; }
.group-name { font-size: 12px; text-align: center; line-height: 20px; white-space: nowrap; }
.group-name.left { text-align: left; padding-left: 11px; }
.fold { position: absolute; right: 10px; bottom: 13px; }

.work { flex: 1; display: flex; margin-bottom: 7px; }
.center { flex: 1; min-width: 0; display: flex; flex-direction: column; }
.notice { height: 47px; background: #401300; border: 1px solid #b5310c; display: flex; align-items: center; padding: 0 14px 0 8px; }
.notice > span:first-of-type { margin-left: 12px; }
.notice button:not(.plain) { height: 30px; border: 1px solid #b8b8b8; background: #292929; font-weight: 600; margin-right: 10px; }
.notice .apply { width: 163px; }
.notice .discard { width: 198px; }
.dismiss { margin-left: 4px; }

.stage { flex: 1; display: flex; background: #fff; color: #252423; }
.canvas { flex: 1; min-width: 0; }
.page { border-bottom: 2px dotted #444; padding: 24px 80px 18px 81px; }
.slicer { margin-left: 31px; width: 394px; font-size: 12px; }
.slicer-head { display: flex; justify-content: space-between; align-items: center; font-size: 10px; height: 18px; padding: 0 4px 0 1px; }
.dates { display: flex; gap: 5px; margin-top: 3px; }
.date { width: 88px; height: 26px; border: 2px solid #8a8a8a; display: flex; align-items: center; padding: 0 4px 0 7px; }
.date input { width: 100%; min-width: 0; border: 0; padding: 0; background: none; font-size: 11px; }
.range { position: relative; height: 24px; margin: 6px 0 0 3px; width: 390px; }
.range::before { content: ""; position: absolute; left: 12px; right: 12px; top: 11px; height: 3px; background: #605e5c; }
.range input { position: absolute; left: 0; top: 0; width: 100%; height: 24px; appearance: none; background: none; pointer-events: none; }
.range input::-webkit-slider-thumb { appearance: none; width: 24px; height: 24px; border-radius: 50%; border: 2px solid #605e5c; background: #fff; pointer-events: auto; }

.visual-row { display: flex; gap: 118px; margin-top: 66px; align-items: flex-start; }
.kpi { width: 500px; flex: none; }
.kpi h2 { font-family: Roboto, "Open Sans", sans-serif; font-size: 15px; line-height: 22px; font-weight: 700; height: 22px; }
.plot { position: relative; height: 401px; }
.plot > svg { width: 100%; height: 100%; }
.kpi-text { position: absolute; left: 0; right: 0; top: 167px; text-align: center; }
.kpi-value { display: flex; justify-content: center; align-items: center; height: 48px; padding-right: 3px; color: #d64550; font-size: 14px; font-family: Roboto, sans-serif; }
.kpi-value strong { font-size: 48px; font-weight: 500; margin-right: 5px; }
.kpi-goal { font-size: 14px; }
.city h3 { font-size: 12px; font-weight: 400; line-height: 12px; padding-bottom: 3px; }
.tiles { display: grid; grid-template-columns: repeat(4, 90px); grid-auto-rows: 68px; gap: 3px 2px; padding-left: 12px; }
.tiles button { background: #f0e199; border: 1px solid #8c8672; box-shadow: inset 0 0 0 1px #cfc48c; color: #605e5c; font-size: 12px; font-weight: 700; line-height: 16px; white-space: normal; padding: 1px 6px 0; }

.filters { width: 251px; border-left: 1px solid #b3b0ad; }
.filter-search { padding: 10px 15px 5px 10px; border-bottom: 1px solid #b3b0ad; }
.filter-search label { display: flex; align-items: center; height: 38px; border: 1px solid #a19f9d; border-radius: 2px; padding-left: 14px; gap: 20px; }
.filter-search input { border: 0; padding: 0; width: 120px; font-size: 16px; background: none; }
.filter-search input::placeholder { color: #252423; opacity: 1; }
.filter-body { padding: 21px 10px 0 10px; }
.filter-head { display: flex; justify-content: space-between; padding-right: 7px; height: 31px; }
.filter-head .plain { align-self: flex-start; }
.filter-head.second { margin-top: 33px; }
.well { display: block; width: 100%; height: 57px; text-align: left; padding-left: 17px; background: #fff; border: 1px solid #323130; border-radius: 2px; }

.pages { height: 44px; background: #292929; border-bottom: 1px solid #707070; display: flex; align-items: stretch; }
.device { width: 30px; margin-left: 4px; display: flex; align-items: flex-start; justify-content: center; padding-top: 8px; border-bottom: 4px solid transparent; margin-bottom: 5px; border-radius: 1px; }
.device.on { border-bottom-color: #25ab92; padding-top: 9px; }
.device + .device { margin-left: 24px; margin-right: 19px; }
.arrow { width: 12px; margin-right: 15px; }
.arrow + .arrow { margin-right: 4px; }
.page-tabs { display: flex; border-left: 1px solid #606060; }
.page-tabs button { border: 0; border-right: 1px solid #484848; background: none; padding: 3px 25px 0; border-bottom: 5px solid transparent; border-top: 4px solid transparent; }
.page-tabs .on { font-weight: 600; color: #fff; border-bottom-color: #25ab92; border-right: 0; padding: 3px 26px 0; }
.page-tabs .add { background: #25ab92; border: 0; padding: 0 18px 4px; }

.viz { width: 226px; border-left: 1px solid #707070; }
.data { width: 222px; border-left: 1px solid #707070; }
.pane-head { display: flex; align-items: center; justify-content: space-between; height: 48px; padding: 2px 12px 0 10px; }
.pane-head h2 { font-size: 18px; line-height: 24px; }
.data .pane-head { padding-right: 8px; }
.viz h3 { font-size: 14px; line-height: 20px; padding-left: 10px; }
.modes { display: flex; gap: 43px; padding: 4px 0 0 10px; }
.mode { width: 40px; height: 40px; border: 0; border-radius: 3px; background: none; display: flex; align-items: center; justify-content: center; }
.mode.on { background: #292929; }
.notch { margin: 5px 0 -1px 20px; position: relative; }
.gallery { border-top: 1px solid #707070; border-bottom: 1px solid #e0e0e0; display: grid; grid-template-columns: repeat(6, 35px); justify-content: start; grid-auto-rows: 35px; padding: 7px 0 0 7px; height: 294px; }
.gallery button { display: flex; align-items: center; justify-content: center; }
.gallery .dots { height: 32px; }
.build { padding: 11px 7px 0 5px; }
.lbl { padding-left: 10px; height: 27px; }
.lbl.strong { font-weight: 600; margin-top: 13px; height: 32px; }
.drop { display: block; width: 100%; height: 35px; background: none; border: 1px dashed #707070; border-radius: 2px; text-align: left; padding-left: 12px; }
.drop.black { background: #000; height: 32px; padding-left: 10px; margin-top: 13px; }
.switch { display: flex; justify-content: space-between; align-items: flex-start; padding: 0 20px 0 10px; height: 32px; }
.switch span { width: 122px; }
.switch.two { height: 40px; }
.switch input { appearance: none; width: 40px; height: 20px; border: 1px solid #aaa; border-radius: 10px; position: relative; }
.switch input::after { content: ""; position: absolute; width: 10px; height: 10px; border-radius: 50%; background: #aaa; left: 5px; top: 4px; }
.switch input:checked { background: #25ab92; border-color: #25ab92; }
.switch input:checked::after { left: 23px; background: #292929; }
.switch input:checked::before { content: ""; position: absolute; left: 9px; top: 2px; width: 5px; height: 10px; border: solid #292929; border-width: 0 1px 1px 0; transform: rotate(40deg); }

.data-search { display: flex; align-items: center; gap: 10px; height: 30px; margin: 9px 0 12px 5px; padding-left: 14px; background: #242424; border: 1px solid #606060; border-bottom-color: #a0a0a0; border-radius: 4px; }
.data-search input { border: 0; background: none; padding: 0; width: 130px; font-size: 16px; }
.data-search input::placeholder { color: #8a8a8a; opacity: 1; }
.tree { list-style: none; display: grid; grid-auto-rows: 30px; padding-left: 18px; }
.tree li { display: flex; align-items: center; white-space: nowrap; }
.chev { width: 12px; height: 12px; margin-right: 6px; }
.lvl1 { padding-left: 19px; }
.lvl2 { padding-left: 38px; }
.tree input { appearance: none; width: 15px; height: 15px; border: 1px solid #b0b0b0; border-radius: 2px; margin-right: 10px; flex: none; }
.ficon { margin-right: 6px; }
</style>
